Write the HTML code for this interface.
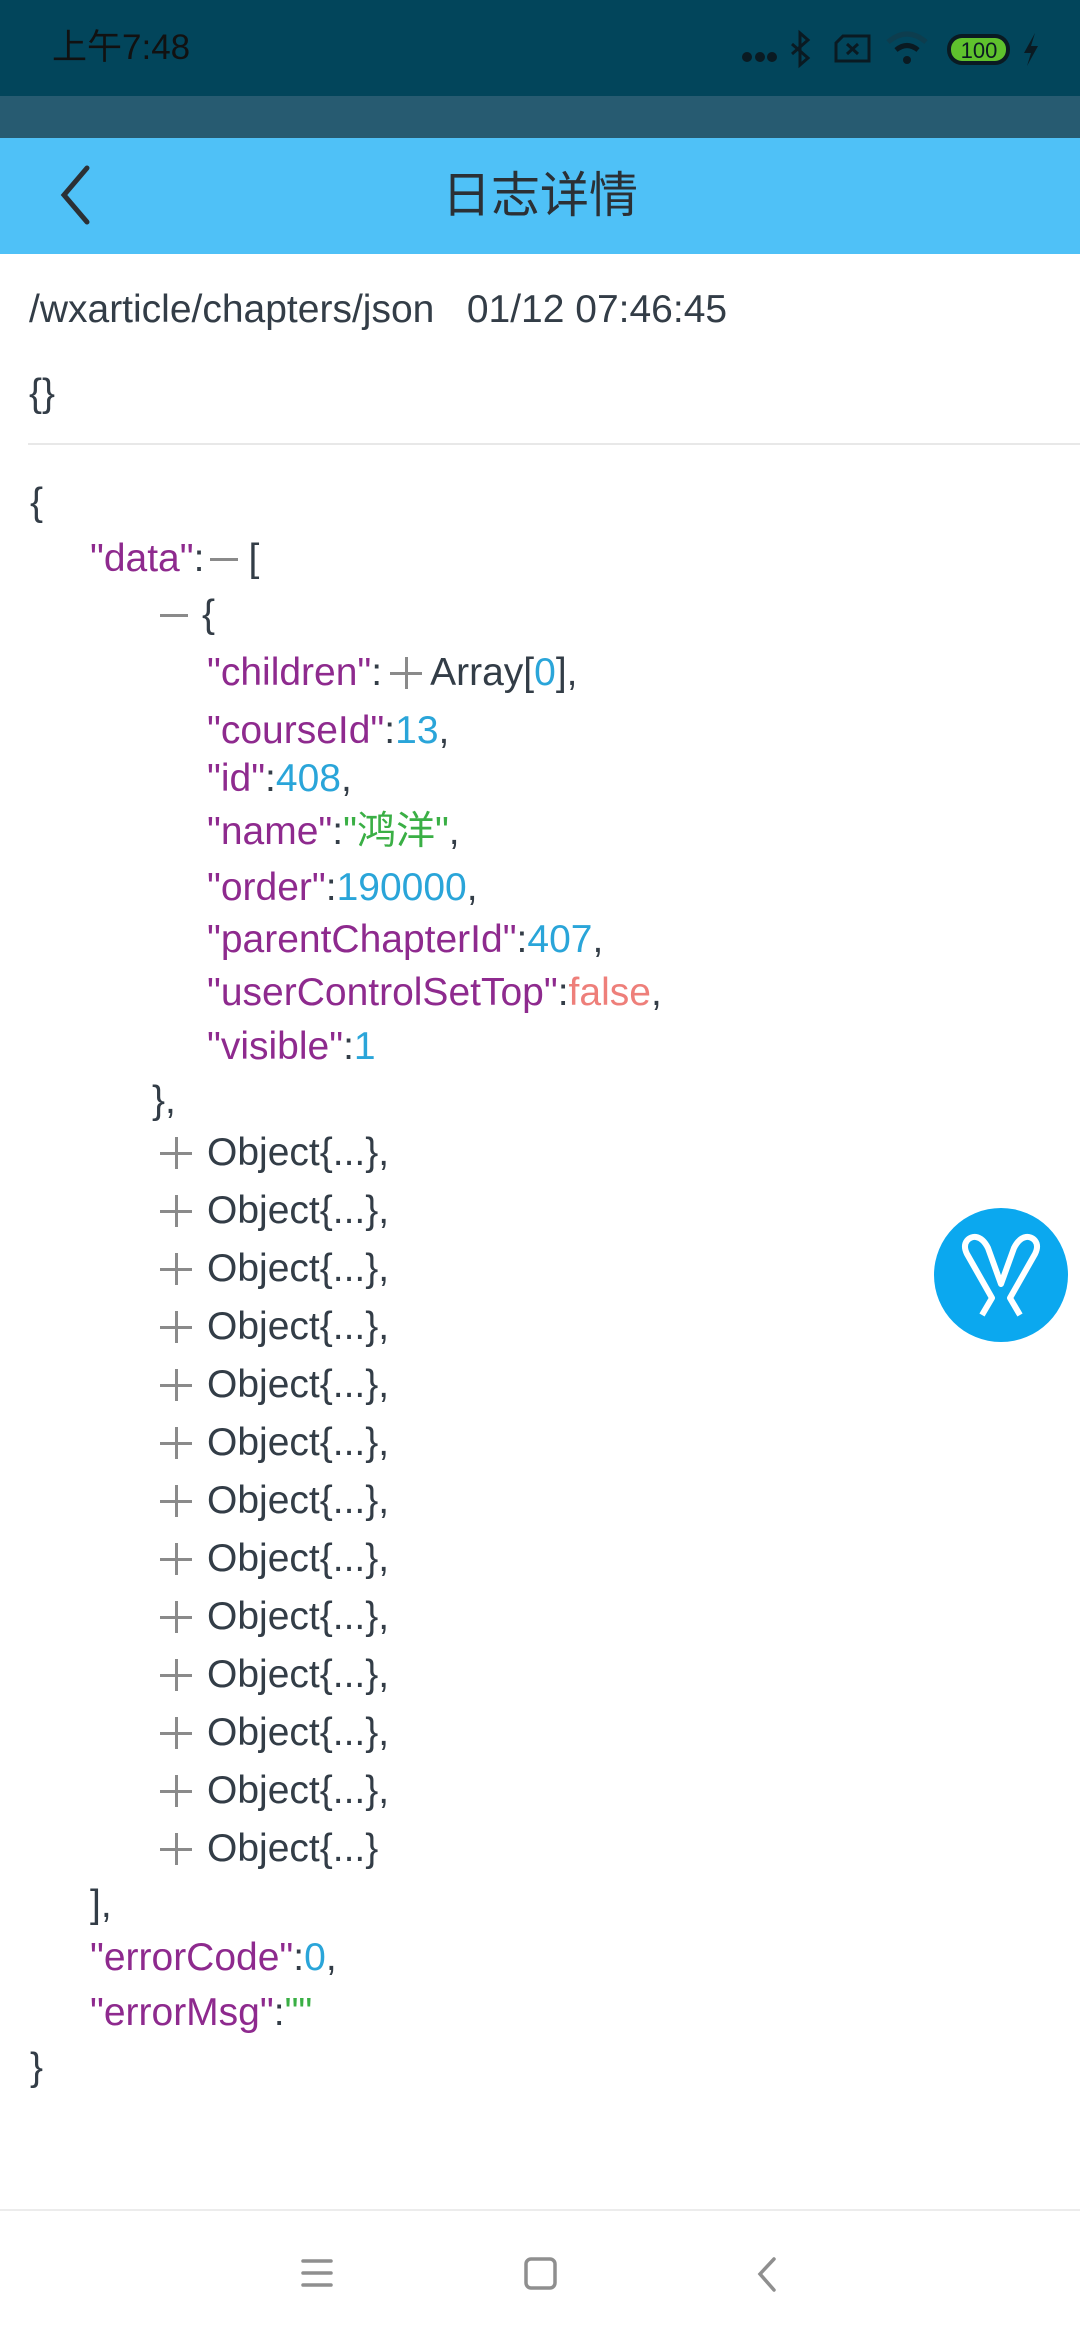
<!DOCTYPE html>
<html><head><meta charset="utf-8">
<style>
*{margin:0;padding:0;box-sizing:border-box}
body{width:1080px;height:2340px;position:relative;background:#fff;font-family:"Liberation Sans","Noto Sans CJK SC",sans-serif;overflow:hidden;color:#333d47}
.sb{position:absolute;left:0;top:0;width:1080px;height:96px;background:#02455b}
.band{position:absolute;left:0;top:96px;width:1080px;height:42px;background:#275b71}
.bar{position:absolute;left:0;top:138px;width:1080px;height:116px;background:#4fc1f7}
.title{position:absolute;left:0;width:1080px;top:168px;text-align:center;font-size:49px;line-height:56px;color:#2b3035}
.time{position:absolute;left:52px;top:27px;font-size:35px;line-height:42px;color:#111}
.l{position:absolute;font-size:39px;line-height:50px;white-space:pre}
.k{color:#8e2a8e}.n{color:#2aa5d9}.s{color:#3aaf45}.f{color:#ee7f7a}
.p{display:inline-block;width:32px;height:32px;vertical-align:-4px;margin:0 8px;background:linear-gradient(#8a8a8a,#8a8a8a) center/32px 3px no-repeat,linear-gradient(#8a8a8a,#8a8a8a) center/3px 32px no-repeat}
.m{display:inline-block;width:28px;height:32px;vertical-align:-4px;margin:0 10px 0 6px;background:linear-gradient(#8a8a8a,#8a8a8a) center/28px 3px no-repeat}
.o .p{margin:0 15px 0 0}
.o .m{margin:0 14px 0 0}
</style></head><body>
<div class="sb"></div><div class="band"></div><div class="bar"></div>
<div class="time">上午7:48</div>
<svg style="position:absolute;left:730px;top:20px" width="330" height="60" viewBox="0 0 330 60">
<g fill="#0a1a22"><circle cx="17" cy="37" r="5"/><circle cx="30" cy="37" r="5"/><circle cx="42" cy="37" r="5"/></g>
<path d="M62,24 L78,38 L70,45 L70,13 L78,20 L62,34" fill="none" stroke="#0a1a22" stroke-width="3"/>
<path d="M113,16 L139,16 L139,41 L106,41 L106,23 Z" fill="none" stroke="#0a1a22" stroke-width="3"/>
<path d="M117,24 L128,34 M128,24 L117,34" stroke="#0a1a22" stroke-width="3"/>
<path d="M158,22 Q177,6 196,22" fill="none" stroke="#0d3d4e" stroke-width="5"/>
<path d="M166,30 Q177,21 188,30" fill="none" stroke="#0a1a22" stroke-width="5"/>
<circle cx="177" cy="40" r="4" fill="#0a1a22"/>
<rect x="217" y="14" width="63" height="31" rx="15" fill="#0a1a22"/>
<rect x="221" y="18" width="55" height="23" rx="11" fill="#5fc12d"/>
<text x="249" y="38" font-size="22" text-anchor="middle" fill="#0a1a22" font-family="Liberation Sans">100</text>
<path d="M305,13 L294,33 L301,33 L297,46 L308,26 L301,26 Z" fill="#0a1a22"/>
</svg>
<svg style="position:absolute;left:55px;top:162px" width="40" height="66"><path d="M32,6 L9,33 L32,60" fill="none" stroke="#2b3035" stroke-width="5" stroke-linecap="round"/></svg>
<div class="title">日志详情</div>
<div class="l" style="left:29px;top:285px">/wxarticle/chapters/json   01/12 07:46:45</div>
<div class="l" style="left:29px;top:369px">{}</div>
<div style="position:absolute;left:28px;top:443px;width:1052px;height:2px;background:#e8e8e8"></div>

<div class="l" style="left:30px;top:478px">{</div>
<div class="l" style="left:90px;top:534px"><span class="k">"data"</span>:<span class="m"></span>[</div>
<div class="l o" style="left:160px;top:590px"><span class="m"></span>{</div>
<div class="l" style="left:207px;top:648px"><span class="k">"children"</span>:<span class="p"></span>Array[<span class="n">0</span>],</div>
<div class="l" style="left:207px;top:706px"><span class="k">"courseId"</span>:<span class="n">13</span>,</div>
<div class="l" style="left:207px;top:754px"><span class="k">"id"</span>:<span class="n">408</span>,</div>
<div class="l" style="left:207px;top:807px"><span class="k">"name"</span>:<span class="s">"鸿洋"</span>,</div>
<div class="l" style="left:207px;top:863px"><span class="k">"order"</span>:<span class="n">190000</span>,</div>
<div class="l" style="left:207px;top:915px"><span class="k">"parentChapterId"</span>:<span class="n">407</span>,</div>
<div class="l" style="left:207px;top:968px"><span class="k">"userControlSetTop"</span>:<span class="f">false</span>,</div>
<div class="l" style="left:207px;top:1022px"><span class="k">"visible"</span>:<span class="n">1</span></div>
<div class="l" style="left:152px;top:1076px">},</div>
<div class="l o" style="left:160px;top:1128px"><span class="p"></span>Object{...},</div>
<div class="l o" style="left:160px;top:1186px"><span class="p"></span>Object{...},</div>
<div class="l o" style="left:160px;top:1244px"><span class="p"></span>Object{...},</div>
<div class="l o" style="left:160px;top:1302px"><span class="p"></span>Object{...},</div>
<div class="l o" style="left:160px;top:1360px"><span class="p"></span>Object{...},</div>
<div class="l o" style="left:160px;top:1418px"><span class="p"></span>Object{...},</div>
<div class="l o" style="left:160px;top:1476px"><span class="p"></span>Object{...},</div>
<div class="l o" style="left:160px;top:1534px"><span class="p"></span>Object{...},</div>
<div class="l o" style="left:160px;top:1592px"><span class="p"></span>Object{...},</div>
<div class="l o" style="left:160px;top:1650px"><span class="p"></span>Object{...},</div>
<div class="l o" style="left:160px;top:1708px"><span class="p"></span>Object{...},</div>
<div class="l o" style="left:160px;top:1766px"><span class="p"></span>Object{...},</div>
<div class="l o" style="left:160px;top:1824px"><span class="p"></span>Object{...}</div>
<div class="l" style="left:90px;top:1880px">],</div>
<div class="l" style="left:90px;top:1933px"><span class="k">"errorCode"</span>:<span class="n">0</span>,</div>
<div class="l" style="left:90px;top:1988px"><span class="k">"errorMsg"</span>:<span class="s">""</span></div>
<div class="l" style="left:30px;top:2043px">}</div>

<svg style="position:absolute;left:934px;top:1208px" width="134" height="134" viewBox="0 0 134 134">
<circle cx="67" cy="67" r="67" fill="#0ba8ef"/>
<path d="M48,107 L58,90 L33,46 C27,34 36,28 42,29 C48,30 52,36 54,40 L67,76 L80,40 C82,36 86,30 92,29 C98,28 107,34 101,46 L76,90 L86,107" fill="none" stroke="#fff" stroke-width="6" stroke-linejoin="round"/>
</svg>

<div style="position:absolute;left:0;top:2209px;width:1080px;height:2px;background:#ececec"></div>
<svg style="position:absolute;left:0;top:2250px" width="1080" height="50">
<g stroke="#8f8f8f" stroke-width="3.5" stroke-linecap="round" fill="none">
<path d="M303,11 L331,11 M303,23 L331,23 M303,35 L331,35"/>
<rect x="526" y="9" width="29" height="29" rx="5"/>
<path d="M774,9 L760,24 L774,40"/>
</g></svg>
</body></html>
